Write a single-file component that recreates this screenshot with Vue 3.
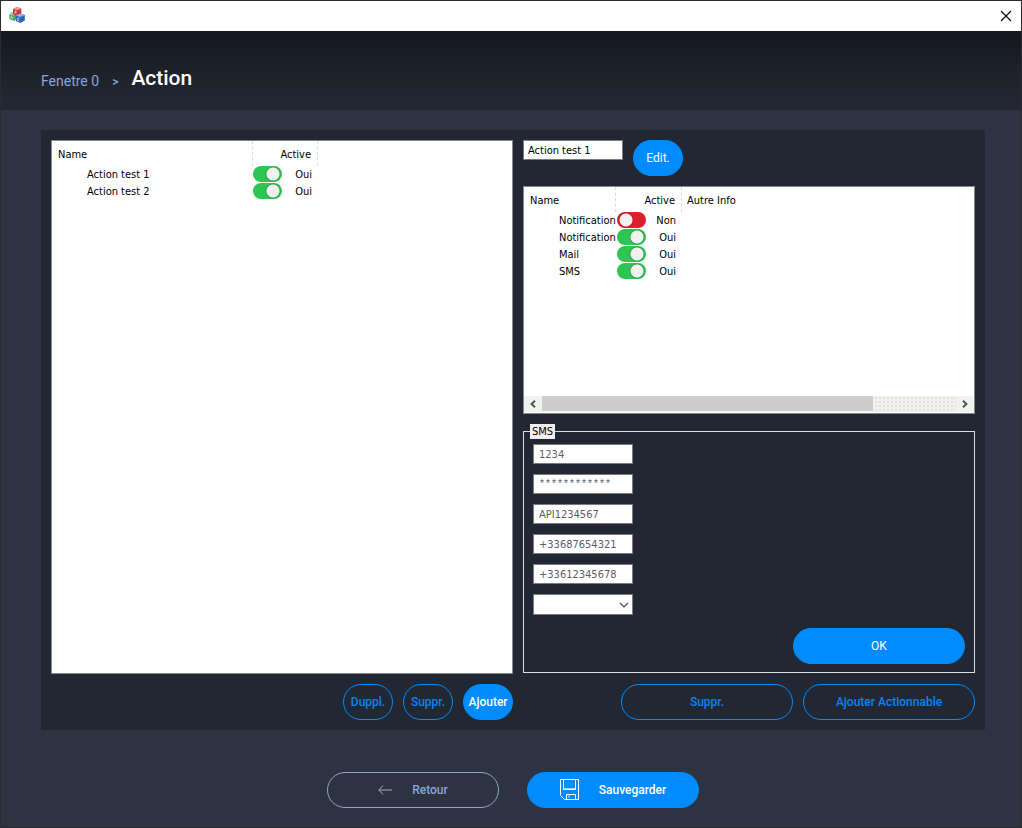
<script setup>
import { ref } from 'vue'

const actions = ref([
  { name: 'Action test 1', active: true },
  { name: 'Action test 2', active: true },
])
const items = ref([
  { name: 'Notification', active: false },
  { name: 'Notification', active: true },
  { name: 'Mail', active: true },
  { name: 'SMS', active: true },
])
const actionName = ref('Action test 1')
const fields = ref([
  { label: 'Identifiant', value: '1234' },
  { label: 'Mot de passe', value: '************', secret: true },
  { label: 'API', value: 'API1234567' },
  { label: 'Expéditeur', value: '+33687654321' },
  { label: 'Destinataire', value: '+33612345678' },
])
</script>

<template>
  <div class="window">
    <div class="titlebar">
      <svg class="app-icon" width="16" height="16" viewBox="0 0 16 16" aria-hidden="true">
        <path d="M0.3 7.5 3 5 7 6.5 7 12.5 5 14 0.3 12z" fill="#4fa866" />
        <path d="M0.3 7.5 3 5 7 6.5 5 8.5z" fill="#a4d3ae" />
        <path d="M1.5 11.5 2.5 8.8 3.8 12" fill="none" stroke="#c5e5c9" stroke-width=".8" />
        <path d="M4 2 8 0 12.3 1.5 12.3 7 8.5 8.8 4 7.3z" fill="#d5303a" />
        <path d="M4 2 8 0 12.3 1.5 8.5 3.2z" fill="#f09a97" />
        <path d="M6 3.8v3M6 4l1.6.7-1.6.6 1.6.9" fill="none" stroke="#f4b9b9" stroke-width=".7" />
        <path d="M6.8 8.5 11 6.5 15.8 8 15.8 13.5 11.5 16 6.8 14z" fill="#2e66b5" />
        <path d="M6.8 8.5 11 6.5 15.8 8 11.3 10z" fill="#8eb5e5" />
        <path d="M10.6 11.2 8.6 11v2.3l2 .6" fill="none" stroke="#c2dcf8" stroke-width=".8" />
      </svg>
      <button class="close" aria-label="Fermer">
        <svg width="12" height="12" viewBox="0 0 12 12"><path d="M1 1 11 11M11 1 1 11" stroke="#111" stroke-width="1.2" /></svg>
      </button>
    </div>

    <nav class="header">
      <a href="#" class="crumb">Fenetre 0</a>
      <span class="sep">&gt;</span>
      <h1>Action</h1>
    </nav>

    <main>
      <div class="panel">
        <section class="column">
          <div class="list">
            <table class="actions">
              <colgroup><col class="c-name" /><col class="c-active" /><col /></colgroup>
              <thead>
                <tr><th>Name</th><th class="right">Active</th><th class="last"></th></tr>
              </thead>
              <tbody>
                <tr v-for="(a, i) in actions" :key="i">
                  <td class="name">{{ a.name }}</td>
                  <td><div class="state">
                    <input v-model="a.active" type="checkbox" :aria-label="a.name" />
                    <span>{{ a.active ? 'Oui' : 'Non' }}</span>
                  </div></td>
                  <td></td>
                </tr>
              </tbody>
            </table>
          </div>
          <div class="buttons">
            <button class="btn small">Duppl.</button>
            <button class="btn small">Suppr.</button>
            <button class="btn small solid">Ajouter</button>
          </div>
        </section>

        <section class="column">
          <div class="edit-row">
            <input v-model="actionName" class="text dark" type="text" aria-label="Nom" />
            <button class="btn small solid plain">Edit.</button>
          </div>
          <div class="list">
            <table class="details">
              <colgroup><col class="c-name" /><col class="c-active" /><col /></colgroup>
              <thead>
                <tr><th>Name</th><th class="right">Active</th><th class="last">Autre Info</th></tr>
              </thead>
              <tbody>
                <tr v-for="(a, i) in items" :key="i">
                  <td class="name">{{ a.name }}</td>
                  <td><div class="state">
                    <input v-model="a.active" type="checkbox" :aria-label="a.name" />
                    <span>{{ a.active ? 'Oui' : 'Non' }}</span>
                  </div></td>
                  <td></td>
                </tr>
              </tbody>
            </table>
            <div class="scrollbar">
              <button aria-label="Défiler à gauche">
                <svg width="8" height="8" viewBox="0 0 8 8"><path d="M6 .8 2.6 4 6 7.2" /></svg>
              </button>
              <div class="track"><div class="thumb"></div></div>
              <button aria-label="Défiler à droite">
                <svg width="8" height="8" viewBox="0 0 8 8"><path d="M2 .8 5.4 4 2 7.2" /></svg>
              </button>
            </div>
          </div>
          <fieldset>
            <legend>SMS</legend>
            <div class="fields">
              <input v-for="f in fields" :key="f.label" v-model="f.value" class="text" :class="{ secret: f.secret }" type="text" :aria-label="f.label" />
              <select class="text" aria-label="Option"><option></option></select>
            </div>
            <div class="buttons"><button class="btn solid plain">OK</button></div>
          </fieldset>
          <div class="buttons">
            <button class="btn">Suppr.</button>
            <button class="btn">Ajouter Actionnable</button>
          </div>
        </section>
      </div>

      <div class="footer">
        <button class="btn muted">
          <svg width="14" height="10" viewBox="0 0 14 10"><path d="M14 5H.8M5 .6.8 5 5 9.4" fill="none" stroke="currentColor" /></svg>
          Retour
        </button>
        <button class="btn solid save">
          <svg width="20" height="22" viewBox="0 0 20 22" fill="none" stroke="#fff">
            <path d="M.5.5h18v20H4.5l-4-4z" />
            <path d="M3.5.5v10h12V.5M6.5 20.5v-5h9v5M9 16.5v2" />
            <path d="M4 9.5h11" stroke="#9bd2ff" />
          </svg>
          Sauvegarder
        </button>
      </div>
    </main>
  </div>
</template>

<style>
body {
  margin: 0;
  background: #2d3340;
}
</style>

<style scoped>
* {
  box-sizing: border-box;
}
.window {
  min-height: 100vh;
  display: flex;
  flex-direction: column;
  border: 1px solid #2a2a30;
  background: #2d3340;
  font-family: "DejaVu Sans Condensed", "DejaVu Sans", sans-serif;
  font-size: 11px;
}
.titlebar {
  height: 30px;
  display: flex;
  justify-content: space-between;
  align-items: center;
  padding: 0 9px 2px 8px;
  background: #fff;
}
.close {
  display: flex;
  padding: 2px 0 0;
  border: 0;
  background: none;
}
.header {
  height: 79px;
  display: flex;
  align-items: flex-start;
  padding: 35px 40px 0;
  background: linear-gradient(#14171e, #222833 85%);
  font-family: Roboto, sans-serif;
  line-height: 30px;
  color: #8ba6d6;
}
.crumb {
  font-size: 14px;
  color: inherit;
  text-decoration: none;
}
.sep {
  margin: 0 13px;
  font-size: 12px;
  line-height: 32px;
  font-weight: 500;
}
h1 {
  margin: 0;
  font-size: 21px;
  line-height: 24px;
  font-weight: 500;
  color: #fff;
}
main {
  flex: 1;
  display: flex;
  flex-direction: column;
  gap: 42px;
  padding: 20px 36px 19px 40px;
}
.panel {
  flex: 1;
  display: grid;
  grid-template-columns: 462fr 452fr;
  gap: 10px;
  padding: 10px;
  background: #222833;
}
.column {
  display: flex;
  flex-direction: column;
  gap: 10px;
  min-width: 0;
}
.list {
  flex: 1;
  display: flex;
  flex-direction: column;
  justify-content: space-between;
  border: 1px solid #828790;
  background: #fff;
}
table {
  width: 100%;
  table-layout: fixed;
  border-collapse: separate;
  border-spacing: 0;
  color: #000;
}
.actions .c-name {
  width: 201px;
}
.details .c-name {
  width: 92px;
}
.actions .c-active {
  width: 65px;
}
.details .c-active {
  width: 66px;
}
th {
  height: 25px;
  padding: 2px 6px 0;
  border-right: 1px dashed #dcdcdc;
  font-weight: 400;
  text-align: left;
}
th.right {
  text-align: right;
}
th.last {
  border-right: 0;
  padding-left: 5px;
}
td {
  height: 17px;
  padding: 0;
  line-height: 16px;
  vertical-align: top;
}
td.name {
  padding: 1px 0 0 35px;
  white-space: nowrap;
}
.state {
  display: flex;
  justify-content: space-between;
  align-items: flex-start;
  height: 17px;
  padding-right: 6px;
  line-height: 18px;
}
.details .state {
  padding-left: 1px;
}
.state input {
  appearance: none;
  width: 29px;
  height: 16px;
  margin: 0;
  border-radius: 8px;
  background: radial-gradient(circle at 9px 8px, #f1f1ee 6px, #b81a26 7px, #df1f2d 8px);
}
.state input:checked {
  background: radial-gradient(circle at 20px 8px, #f1f1ee 6px, #27a548 7px, #2dc653 8px);
}
.scrollbar {
  display: flex;
  height: 17px;
  border-bottom: 1px solid #fff;
  background: #f1f1ee;
}
.scrollbar button {
  width: 18px;
  display: flex;
  align-items: center;
  justify-content: center;
  padding: 0;
  border: 0;
  background: none;
}
.scrollbar path {
  fill: none;
  stroke: #50545c;
  stroke-width: 2;
}
.track {
  flex: 1;
  background: radial-gradient(circle, #e2e2dc 1px, transparent 1px) 0 0 / 4px 4px;
}
.thumb {
  width: 80%;
  height: 15px;
  background: #cdcdcd;
}
.edit-row {
  display: flex;
  align-items: flex-start;
  gap: 10px;
}
.text {
  width: 100px;
  height: 20px;
  padding: 0 4px 0 5px;
  border: 1px solid #7a7a7a;
  border-radius: 0;
  background: #fff;
  font: inherit;
  color: #5a5d66;
}
.text.dark {
  padding-left: 4px;
  color: #000;
}
.text.secret {
  font-family: "Liberation Mono", monospace;
  font-size: 10px;
}
select.text {
  height: 21px;
  appearance: none;
  background: #fff url("data:image/svg+xml,%3Csvg xmlns='http://www.w3.org/2000/svg' width='10' height='6'%3E%3Cpath d='M1 1l4 4 4-4' fill='none' stroke='%23444b5a' stroke-width='1.2'/%3E%3C/svg%3E") no-repeat right 3px center;
}
fieldset {
  min-width: 0;
  margin: 0 0 1px;
  padding: 5px 9px 8px;
  border: 1px solid #dcdcdc;
}
legend {
  margin-left: -3px;
  padding: 0 2px;
  background: #f0f0f0;
  color: #000;
  line-height: 15px;
}
.fields {
  display: flex;
  flex-direction: column;
  gap: 10px;
  margin-bottom: 13px;
}
.buttons {
  display: flex;
  justify-content: flex-end;
  gap: 10px;
}
.btn {
  width: 172px;
  height: 36px;
  display: flex;
  align-items: center;
  justify-content: center;
  padding: 0;
  border: 1px solid #008cff;
  border-radius: 18px;
  background: none;
  font: 500 12px Roboto, sans-serif;
  color: #0a84f0;
}
.small {
  width: 50px;
}
.solid {
  background: #008cff;
  color: #fff;
}
.plain {
  font-weight: 400;
}
.muted {
  gap: 20px;
  border-color: #8fa6cc;
  color: #8ba6d6;
}
.muted svg {
  color: #a3adc0;
}
.save {
  gap: 19px;
}
.footer {
  display: flex;
  justify-content: center;
  gap: 28px;
}
</style>
